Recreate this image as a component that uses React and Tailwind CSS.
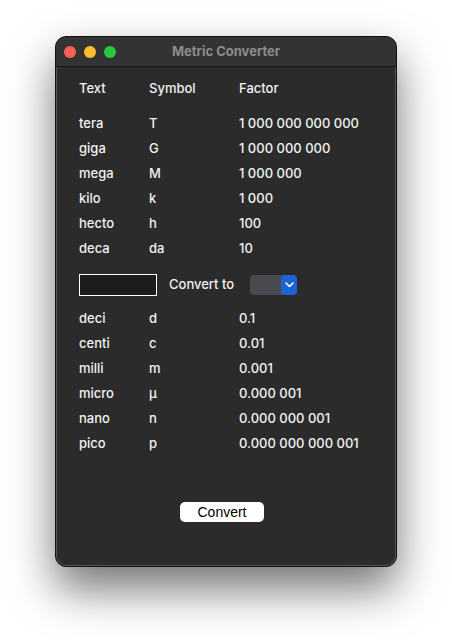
import React from "react";

const upper = [
  ["tera", "T", "1 000 000 000 000"],
  ["giga", "G", "1 000 000 000"],
  ["mega", "M", "1 000 000"],
  ["kilo", "k", "1 000"],
  ["hecto", "h", "100"],
  ["deca", "da", "10"],
];
const lower = [
  ["deci", "d", "0.1"],
  ["centi", "c", "0.01"],
  ["milli", "m", "0.001"],
  ["micro", "µ", "0.000 001"],
  ["nano", "n", "0.000 000 001"],
  ["pico", "p", "0.000 000 000 001"],
];

function Row({ r }) {
  return (
    <div className="flex h-[25px] items-center">
      <div className="w-[70px]">{r[0]}</div>
      <div className="w-[90px]">{r[1]}</div>
      <div>{r[2]}</div>
    </div>
  );
}

export default function App() {
  return (
    <div
      className="min-h-[640px] w-[452px] bg-white pl-[55px] pt-[36px]"
      style={{ fontFamily: "Inter, 'Noto Sans', sans-serif" }}
    >
      <div className="flex h-[531px] w-[342px] flex-col overflow-hidden rounded-[11px] border border-[#111] bg-[#2b2b2b] shadow-[0_22px_45px_rgba(0,0,0,0.55),inset_0_0_0_1px_#555]">
        <div className="relative flex h-[30px] shrink-0 items-center justify-center border-b border-[#161616] bg-[#333333]">
          <div className="absolute left-[8px] top-[9px] flex gap-[8px]">
            <div className="h-[12px] w-[12px] rounded-full bg-[#fe5f57]" />
            <div className="h-[12px] w-[12px] rounded-full bg-[#febc2e]" />
            <div className="h-[12px] w-[12px] rounded-full bg-[#28c840]" />
          </div>
          <div className="text-[13px] font-bold text-[#8c8c8c]">Metric Converter</div>
        </div>
        <div className="flex flex-col pl-[23px] pt-[9px] text-[13px] font-medium text-[#f2f2f2]">
          <Row r={["Text", "Symbol", "Factor"]} />
          <div className="mt-[10px]">
            {upper.map((r) => (
              <Row key={r[0]} r={r} />
            ))}
          </div>
          <div className="mt-[13px] flex h-[21px] items-center">
            <div className="h-[22px] w-[78px] border border-white bg-[#1c1c1c]" />
            <div className="ml-[12px]">Convert to</div>
            <div className="ml-[16px] flex h-[20px] w-[47px] overflow-hidden rounded-[4px] bg-[#4b4950]">
              <div className="flex-1" />
              <div className="flex w-[16px] items-center justify-center rounded-[4px] bg-[#1e63d6]">
                <svg width="9" height="6" viewBox="0 0 9 6">
                  <path d="M1 1l3.5 3.5L8 1" stroke="white" strokeWidth="1.6" fill="none" strokeLinecap="round" strokeLinejoin="round" />
                </svg>
              </div>
            </div>
          </div>
          <div className="mt-[11px]">
            {lower.map((r) => (
              <Row key={r[0]} r={r} />
            ))}
          </div>
        </div>
        <div className="mt-[46px] flex justify-center pr-[8px]">
          <div
            className="flex h-[20px] w-[84px] items-center justify-center rounded-[5px] bg-white text-[14px] text-black"
            style={{ fontFamily: "'Liberation Sans', Arial, sans-serif" }}
          >
            Convert
          </div>
        </div>
      </div>
    </div>
  );
}
